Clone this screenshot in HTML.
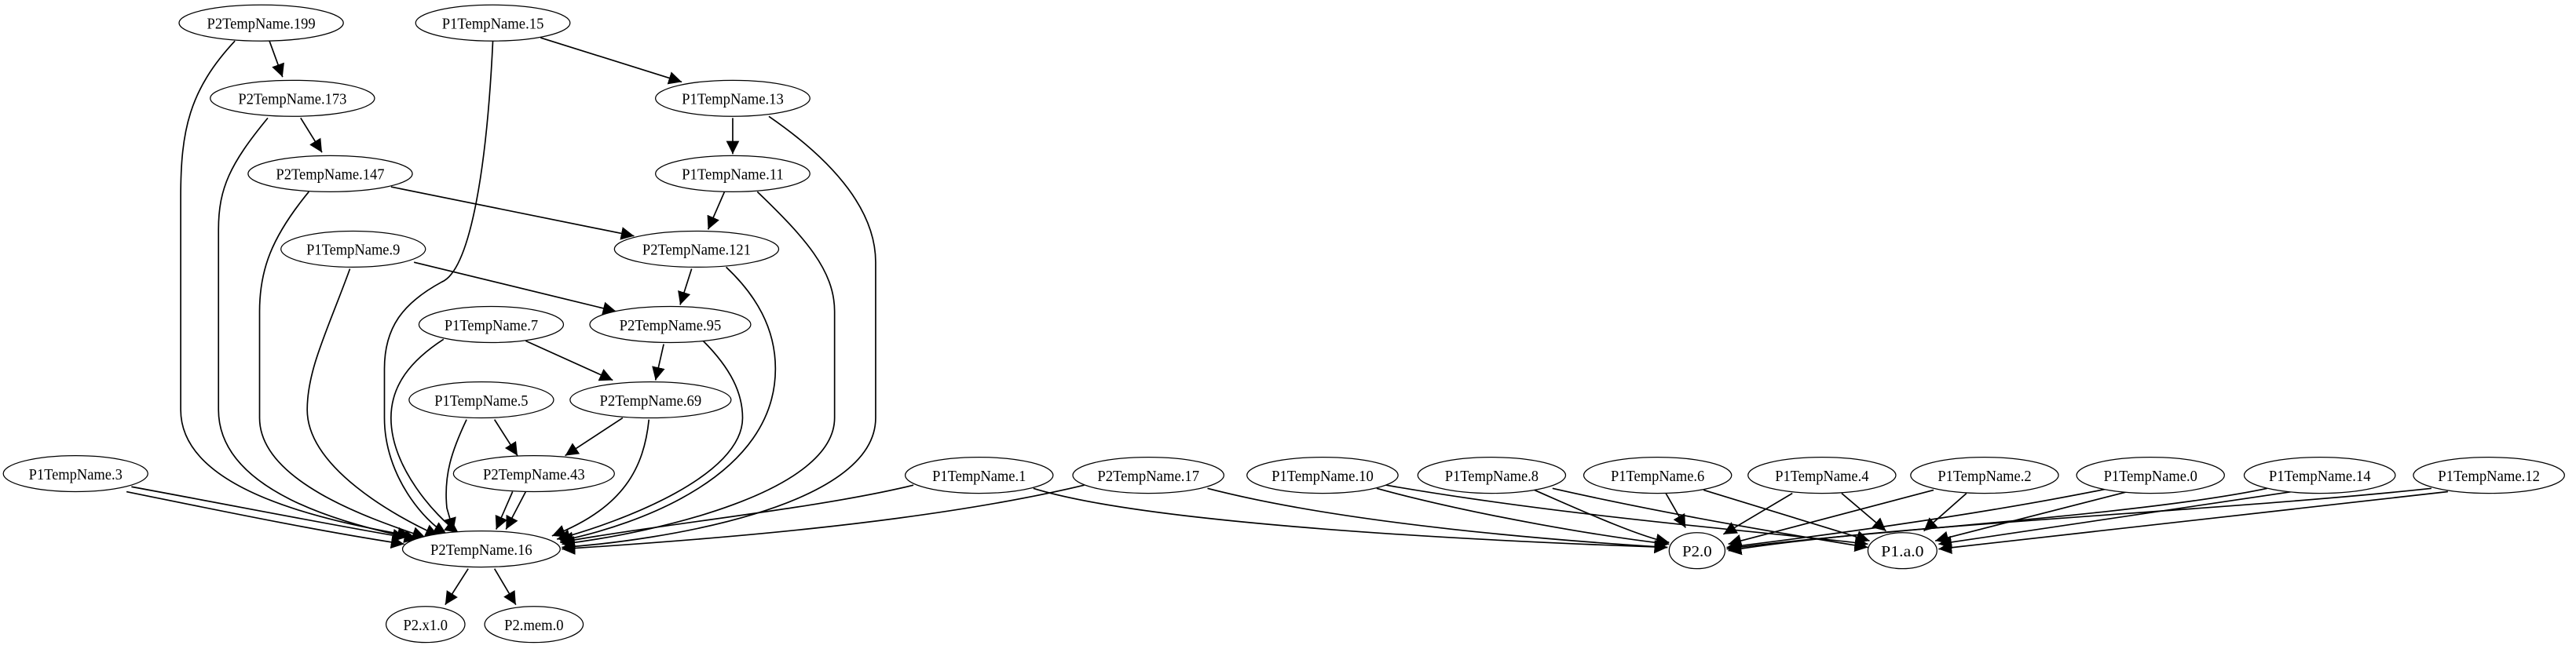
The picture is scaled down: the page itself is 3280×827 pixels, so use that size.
<!DOCTYPE html>
<html><head><meta charset="utf-8"><style>
html,body{margin:0;padding:0;background:#fff;width:3280px;height:827px;overflow:hidden}
svg{display:block}
text{font-family:"Liberation Serif",serif;font-size:9.5px;fill:#000}
</style></head><body>
<svg width="3280" height="827" viewBox="0 0 1568 396" preserveAspectRatio="none" xmlns="http://www.w3.org/2000/svg">
<defs>
<marker id="a" markerUnits="userSpaceOnUse" markerWidth="10" markerHeight="8" refX="8" refY="4" orient="auto">
<path d="M0,0 L8,4 L0,8 Z" fill="#000"/>
</marker>
</defs>
<g fill="none" stroke="#000" stroke-width="0.8" marker-end="url(#a)">
<path d="M164,25 L172,47"/>
<path d="M329,23 L415,50"/>
<path d="M183,72 L196,93"/>
<path d="M446,72 L446,94"/>
<path d="M238,114 L386,144"/>
<path d="M441,117 L431,140"/>
<path d="M252,160 L375,190"/>
<path d="M421,164 L414,186"/>
<path d="M320,208 L373,232"/>
<path d="M404,210 L399,232"/>
<path d="M301,256 L315,278"/>
<path d="M379,255 L344,278"/>
<path d="M285,347 L271,369"/>
<path d="M301,347 L314,369"/>
<path d="M143,25 C115,55 110,80 110,120 L110,250 C110,300 200,318 250,327"/>
<path d="M163,72 C140,100 133,115 133,140 L133,250 C133,300 210,320 254,329"/>
<path d="M188,117 C165,145 158,165 158,190 L158,255 C158,295 230,318 259,328"/>
<path d="M213,164 C200,200 187,225 187,250 C187,285 240,315 267,327"/>
<path d="M300,25 C296,110 285,165 269,172 C245,185 234,200 234,225 L234,255 C234,290 258,318 272,326"/>
<path d="M270,207 C250,220 238,235 238,255 C238,285 265,315 279,325"/>
<path d="M284,256 C275,275 270,290 272,310 L276,324"/>
<path d="M312,300 L302,323"/>
<path d="M320,300 L308,323"/>
<path d="M395,256 C392,285 380,310 336,327"/>
<path d="M428,208 C445,225 452,240 452,255 C452,290 380,318 339,329"/>
<path d="M442,163 C460,180 472,200 472,225 C472,290 390,320 341,330"/>
<path d="M461,117 C490,145 508,165 508,190 L508,255 C508,300 400,325 342,332"/>
<path d="M468,71 C510,100 533,130 533,160 L533,255 C533,310 400,330 342,334"/>
<path d="M80,297 C150,310 200,320 247,328"/>
<path d="M77,300 C150,315 200,325 246,332"/>
<path d="M556,296 C500,310 400,320 341,331"/>
<path d="M660,296 C560,320 420,330 342,335"/>
<path d="M629,298 C700,320 900,330 1015,334"/>
<path d="M735,298 C820,320 950,330 1015,334"/>
<path d="M838,298 C900,315 980,328 1016,332"/>
<path d="M838,295 C950,315 1080,325 1137,332"/>
<path d="M934,299 C970,315 1000,328 1016,331"/>
<path d="M945,298 C1020,315 1100,328 1137,334"/>
<path d="M1014,301 L1026,322"/>
<path d="M1037,299 L1138,330"/>
<path d="M1091,301 L1049,326"/>
<path d="M1121,301 L1148,324"/>
<path d="M1177,299 L1052,332"/>
<path d="M1197,301 L1171,324"/>
<path d="M1284,298 C1200,315 1100,328 1051,334"/>
<path d="M1295,300 L1178,330"/>
<path d="M1380,298 C1300,315 1120,325 1051,335"/>
<path d="M1395,300 L1180,332"/>
<path d="M1480,298 C1350,312 1150,320 1052,336"/>
<path d="M1490,300 L1180,335"/>
</g>
<g fill="#fff" stroke="#000" stroke-width="0.6">
<ellipse cx="159" cy="14" rx="50" ry="11"/>
<ellipse cx="300" cy="14" rx="47" ry="11"/>
<ellipse cx="178" cy="60" rx="50" ry="11"/>
<ellipse cx="446" cy="60" rx="47" ry="11"/>
<ellipse cx="201" cy="106" rx="50" ry="11"/>
<ellipse cx="446" cy="106" rx="47" ry="11"/>
<ellipse cx="215" cy="152" rx="44" ry="11"/>
<ellipse cx="424" cy="152" rx="50" ry="11"/>
<ellipse cx="299" cy="198" rx="44" ry="11"/>
<ellipse cx="408" cy="198" rx="49" ry="11"/>
<ellipse cx="293" cy="244" rx="44" ry="11"/>
<ellipse cx="396" cy="244" rx="49" ry="11"/>
<ellipse cx="46" cy="289" rx="44" ry="11"/>
<ellipse cx="325" cy="289" rx="49" ry="11"/>
<ellipse cx="596" cy="290" rx="45" ry="11"/>
<ellipse cx="699" cy="290" rx="46" ry="11"/>
<ellipse cx="805" cy="290" rx="46" ry="11"/>
<ellipse cx="908" cy="290" rx="45" ry="11"/>
<ellipse cx="1009" cy="290" rx="45" ry="11"/>
<ellipse cx="1109" cy="290" rx="45" ry="11"/>
<ellipse cx="1208" cy="290" rx="45" ry="11"/>
<ellipse cx="1309" cy="290" rx="45" ry="11"/>
<ellipse cx="1412" cy="290" rx="46" ry="11"/>
<ellipse cx="1515" cy="290" rx="46" ry="11"/>
<ellipse cx="293" cy="335" rx="48" ry="11"/>
<ellipse cx="1033" cy="336" rx="17" ry="11"/>
<ellipse cx="1158" cy="336" rx="21" ry="11"/>
<ellipse cx="259" cy="381" rx="24" ry="11"/>
<ellipse cx="325" cy="381" rx="30" ry="11"/>
</g>
<g text-anchor="middle" lengthAdjust="spacingAndGlyphs">
<text x="159" y="17.5" textLength="66" lengthAdjust="spacingAndGlyphs">P2TempName.199</text>
<text x="300" y="17.5" textLength="62" lengthAdjust="spacingAndGlyphs">P1TempName.15</text>
<text x="178" y="63.5" textLength="66" lengthAdjust="spacingAndGlyphs">P2TempName.173</text>
<text x="446" y="63.5" textLength="62" lengthAdjust="spacingAndGlyphs">P1TempName.13</text>
<text x="201" y="109.5" textLength="66" lengthAdjust="spacingAndGlyphs">P2TempName.147</text>
<text x="446" y="109.5" textLength="62" lengthAdjust="spacingAndGlyphs">P1TempName.11</text>
<text x="215" y="155.5" textLength="57" lengthAdjust="spacingAndGlyphs">P1TempName.9</text>
<text x="424" y="155.5" textLength="66" lengthAdjust="spacingAndGlyphs">P2TempName.121</text>
<text x="299" y="201.5" textLength="57" lengthAdjust="spacingAndGlyphs">P1TempName.7</text>
<text x="408" y="201.5" textLength="62" lengthAdjust="spacingAndGlyphs">P2TempName.95</text>
<text x="293" y="247.5" textLength="57" lengthAdjust="spacingAndGlyphs">P1TempName.5</text>
<text x="396" y="247.5" textLength="62" lengthAdjust="spacingAndGlyphs">P2TempName.69</text>
<text x="46" y="292.5" textLength="57" lengthAdjust="spacingAndGlyphs">P1TempName.3</text>
<text x="325" y="292.5" textLength="62" lengthAdjust="spacingAndGlyphs">P2TempName.43</text>
<text x="596" y="293.5" textLength="57" lengthAdjust="spacingAndGlyphs">P1TempName.1</text>
<text x="699" y="293.5" textLength="62" lengthAdjust="spacingAndGlyphs">P2TempName.17</text>
<text x="805" y="293.5" textLength="62" lengthAdjust="spacingAndGlyphs">P1TempName.10</text>
<text x="908" y="293.5" textLength="57" lengthAdjust="spacingAndGlyphs">P1TempName.8</text>
<text x="1009" y="293.5" textLength="57" lengthAdjust="spacingAndGlyphs">P1TempName.6</text>
<text x="1109" y="293.5" textLength="57" lengthAdjust="spacingAndGlyphs">P1TempName.4</text>
<text x="1208" y="293.5" textLength="57" lengthAdjust="spacingAndGlyphs">P1TempName.2</text>
<text x="1309" y="293.5" textLength="57" lengthAdjust="spacingAndGlyphs">P1TempName.0</text>
<text x="1412" y="293.5" textLength="62" lengthAdjust="spacingAndGlyphs">P1TempName.14</text>
<text x="1515" y="293.5" textLength="62" lengthAdjust="spacingAndGlyphs">P1TempName.12</text>
<text x="293" y="338.5" textLength="62" lengthAdjust="spacingAndGlyphs">P2TempName.16</text>
<text x="1033" y="339.5" textLength="18" lengthAdjust="spacingAndGlyphs">P2.0</text>
<text x="1158" y="339.5" textLength="26" lengthAdjust="spacingAndGlyphs">P1.a.0</text>
<text x="259" y="384.5" textLength="27" lengthAdjust="spacingAndGlyphs">P2.x1.0</text>
<text x="325" y="384.5" textLength="36" lengthAdjust="spacingAndGlyphs">P2.mem.0</text>
</g>
</svg>
</body></html>
